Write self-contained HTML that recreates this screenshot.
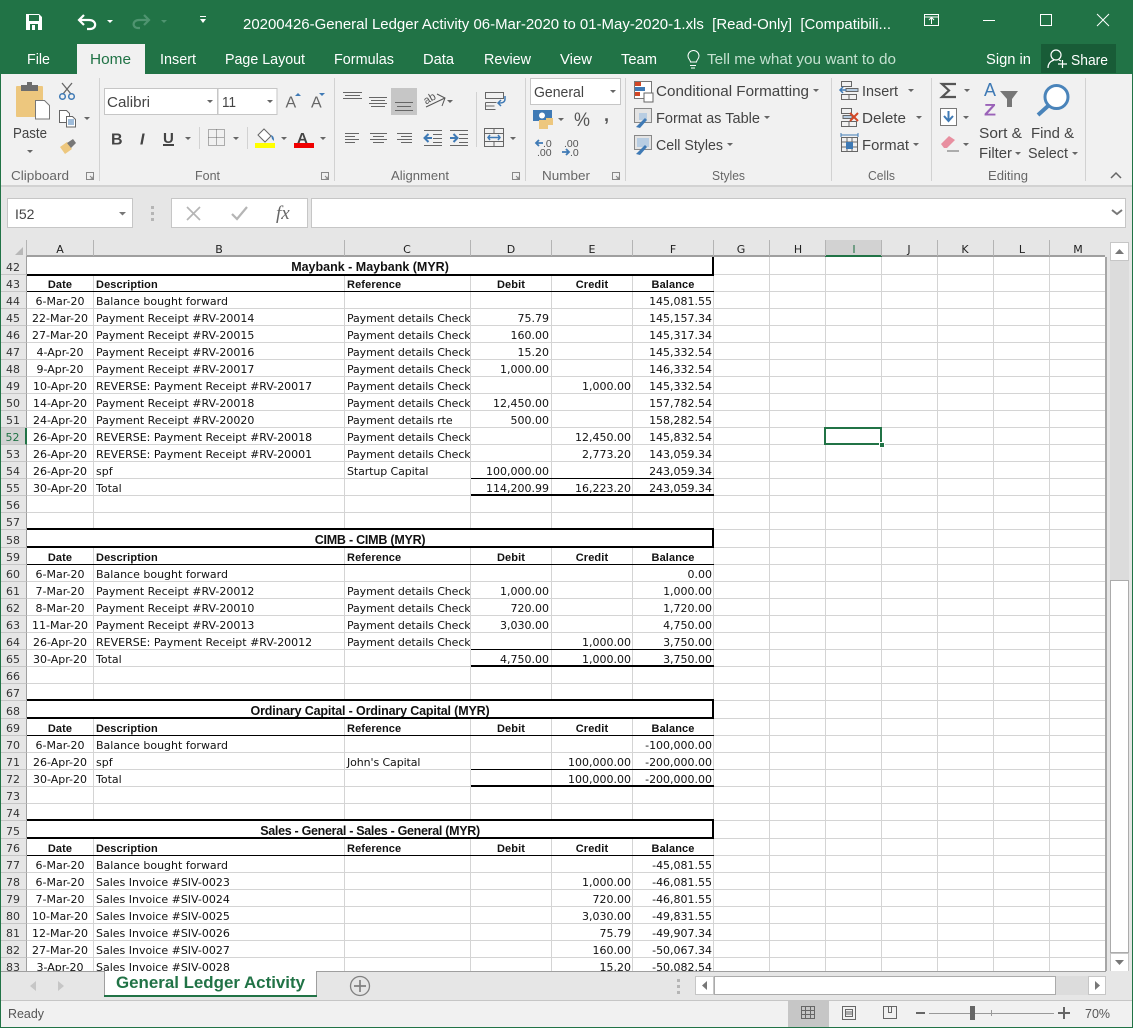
<!DOCTYPE html>
<html><head><meta charset="utf-8"><title>General Ledger Activity</title>
<style>
html,body{margin:0;padding:0;background:#fff}
#w{position:relative;width:1133px;height:1028px;overflow:hidden;background:#fff}
#w svg.c{position:absolute;left:0;top:0}
#gw{position:absolute;left:0;top:257px;width:1106px;height:714px;overflow:hidden}
table{border-collapse:separate;border-spacing:0;table-layout:fixed;width:1106px;font:11px/12px "DejaVu Sans","Liberation Sans",sans-serif;color:#111}
td,th{box-sizing:border-box;height:17px;padding:4px 0 0;border-right:1px solid #d4d4d4;border-bottom:1px solid #d4d4d4;overflow:hidden;white-space:nowrap;font-weight:normal}
th{background:#e6e6e6;color:#333;text-align:center;border-right:1px solid #9f9f9f;border-bottom:1px solid #c6c6c6}
td:nth-child(2){text-align:center}
td:nth-child(3),td:nth-child(4){padding-left:2px}
td:nth-child(4){letter-spacing:-.1px}
td:nth-child(5),td:nth-child(6),td:nth-child(7){text-align:right;padding-right:1px}
td:nth-child(5){padding-right:2px}
td.g{border-right:0;background:repeating-linear-gradient(90deg,#fff 0 55px,#d4d4d4 55px 56px)}
tr.h td{font:bold 11px/12px "Liberation Sans",sans-serif;letter-spacing:.12px}
tr.h th{font:11px/12px "DejaVu Sans",sans-serif}
tr.h td:nth-child(5),tr.h td:nth-child(6),tr.h td:nth-child(7){text-align:center;padding-right:0}
tr.t td,tr.t th{height:18px}
tr.t td:nth-child(2){font:bold 12.5px/13px "Liberation Sans",sans-serif;text-align:center;padding:4px 0 0}
tr.s th{background:#d2d2d2;color:#217346;border-right:2px solid #217346}
.b{position:absolute;background:#000}
</style></head><body><div id="w">

<div id="gw"><table>
<colgroup><col style="width:27px"><col style="width:67px"><col style="width:251px"><col style="width:126px"><col style="width:81px"><col style="width:81px"><col style="width:81px"><col style="width:392px"></colgroup>
<tr class="t"><th>42</th><td colspan="6">Maybank - Maybank (MYR)</td><td class="g"></td></tr>
<tr class="h"><th>43</th><td>Date</td><td>Description</td><td>Reference</td><td>Debit</td><td>Credit</td><td>Balance</td><td class="g"></td></tr>
<tr><th>44</th><td>6-Mar-20</td><td>Balance bought forward</td><td></td><td></td><td></td><td>145,081.55</td><td class="g"></td></tr>
<tr><th>45</th><td>22-Mar-20</td><td>Payment Receipt #RV-20014</td><td>Payment details Check</td><td>75.79</td><td></td><td>145,157.34</td><td class="g"></td></tr>
<tr><th>46</th><td>27-Mar-20</td><td>Payment Receipt #RV-20015</td><td>Payment details Check</td><td>160.00</td><td></td><td>145,317.34</td><td class="g"></td></tr>
<tr><th>47</th><td>4-Apr-20</td><td>Payment Receipt #RV-20016</td><td>Payment details Check</td><td>15.20</td><td></td><td>145,332.54</td><td class="g"></td></tr>
<tr><th>48</th><td>9-Apr-20</td><td>Payment Receipt #RV-20017</td><td>Payment details Check</td><td>1,000.00</td><td></td><td>146,332.54</td><td class="g"></td></tr>
<tr><th>49</th><td>10-Apr-20</td><td>REVERSE: Payment Receipt #RV-20017</td><td>Payment details Check</td><td></td><td>1,000.00</td><td>145,332.54</td><td class="g"></td></tr>
<tr><th>50</th><td>14-Apr-20</td><td>Payment Receipt #RV-20018</td><td>Payment details Check</td><td>12,450.00</td><td></td><td>157,782.54</td><td class="g"></td></tr>
<tr><th>51</th><td>24-Apr-20</td><td>Payment Receipt #RV-20020</td><td>Payment details rte</td><td>500.00</td><td></td><td>158,282.54</td><td class="g"></td></tr>
<tr class="s"><th>52</th><td>26-Apr-20</td><td>REVERSE: Payment Receipt #RV-20018</td><td>Payment details Check</td><td></td><td>12,450.00</td><td>145,832.54</td><td class="g"></td></tr>
<tr><th>53</th><td>26-Apr-20</td><td>REVERSE: Payment Receipt #RV-20001</td><td>Payment details Check</td><td></td><td>2,773.20</td><td>143,059.34</td><td class="g"></td></tr>
<tr><th>54</th><td>26-Apr-20</td><td>spf</td><td>Startup Capital</td><td>100,000.00</td><td></td><td>243,059.34</td><td class="g"></td></tr>
<tr><th>55</th><td>30-Apr-20</td><td>Total</td><td></td><td>114,200.99</td><td>16,223.20</td><td>243,059.34</td><td class="g"></td></tr>
<tr><th>56</th><td></td><td></td><td></td><td></td><td></td><td></td><td class="g"></td></tr>
<tr><th>57</th><td></td><td></td><td></td><td></td><td></td><td></td><td class="g"></td></tr>
<tr class="t"><th>58</th><td colspan="6" style="letter-spacing:-.23px">CIMB - CIMB (MYR)</td><td class="g"></td></tr>
<tr class="h"><th>59</th><td>Date</td><td>Description</td><td>Reference</td><td>Debit</td><td>Credit</td><td>Balance</td><td class="g"></td></tr>
<tr><th>60</th><td>6-Mar-20</td><td>Balance bought forward</td><td></td><td></td><td></td><td>0.00</td><td class="g"></td></tr>
<tr><th>61</th><td>7-Mar-20</td><td>Payment Receipt #RV-20012</td><td>Payment details Check</td><td>1,000.00</td><td></td><td>1,000.00</td><td class="g"></td></tr>
<tr><th>62</th><td>8-Mar-20</td><td>Payment Receipt #RV-20010</td><td>Payment details Check</td><td>720.00</td><td></td><td>1,720.00</td><td class="g"></td></tr>
<tr><th>63</th><td>11-Mar-20</td><td>Payment Receipt #RV-20013</td><td>Payment details Check</td><td>3,030.00</td><td></td><td>4,750.00</td><td class="g"></td></tr>
<tr><th>64</th><td>26-Apr-20</td><td>REVERSE: Payment Receipt #RV-20012</td><td>Payment details Check</td><td></td><td>1,000.00</td><td>3,750.00</td><td class="g"></td></tr>
<tr><th>65</th><td>30-Apr-20</td><td>Total</td><td></td><td>4,750.00</td><td>1,000.00</td><td>3,750.00</td><td class="g"></td></tr>
<tr><th>66</th><td></td><td></td><td></td><td></td><td></td><td></td><td class="g"></td></tr>
<tr><th>67</th><td></td><td></td><td></td><td></td><td></td><td></td><td class="g"></td></tr>
<tr class="t"><th>68</th><td colspan="6" style="letter-spacing:-.15px">Ordinary Capital - Ordinary Capital (MYR)</td><td class="g"></td></tr>
<tr class="h"><th>69</th><td>Date</td><td>Description</td><td>Reference</td><td>Debit</td><td>Credit</td><td>Balance</td><td class="g"></td></tr>
<tr><th>70</th><td>6-Mar-20</td><td>Balance bought forward</td><td></td><td></td><td></td><td>-100,000.00</td><td class="g"></td></tr>
<tr><th>71</th><td>26-Apr-20</td><td>spf</td><td>John's Capital</td><td></td><td>100,000.00</td><td>-200,000.00</td><td class="g"></td></tr>
<tr><th>72</th><td>30-Apr-20</td><td>Total</td><td></td><td></td><td>100,000.00</td><td>-200,000.00</td><td class="g"></td></tr>
<tr><th>73</th><td></td><td></td><td></td><td></td><td></td><td></td><td class="g"></td></tr>
<tr><th>74</th><td></td><td></td><td></td><td></td><td></td><td></td><td class="g"></td></tr>
<tr class="t"><th>75</th><td colspan="6" style="letter-spacing:-.3px">Sales - General - Sales - General (MYR)</td><td class="g"></td></tr>
<tr class="h"><th>76</th><td>Date</td><td>Description</td><td>Reference</td><td>Debit</td><td>Credit</td><td>Balance</td><td class="g"></td></tr>
<tr><th>77</th><td>6-Mar-20</td><td>Balance bought forward</td><td></td><td></td><td></td><td>-45,081.55</td><td class="g"></td></tr>
<tr><th>78</th><td>6-Mar-20</td><td>Sales Invoice #SIV-0023</td><td></td><td></td><td>1,000.00</td><td>-46,081.55</td><td class="g"></td></tr>
<tr><th>79</th><td>7-Mar-20</td><td>Sales Invoice #SIV-0024</td><td></td><td></td><td>720.00</td><td>-46,801.55</td><td class="g"></td></tr>
<tr><th>80</th><td>10-Mar-20</td><td>Sales Invoice #SIV-0025</td><td></td><td></td><td>3,030.00</td><td>-49,831.55</td><td class="g"></td></tr>
<tr><th>81</th><td>12-Mar-20</td><td>Sales Invoice #SIV-0026</td><td></td><td></td><td>75.79</td><td>-49,907.34</td><td class="g"></td></tr>
<tr><th>82</th><td>27-Mar-20</td><td>Sales Invoice #SIV-0027</td><td></td><td></td><td>160.00</td><td>-50,067.34</td><td class="g"></td></tr>
<tr><th>83</th><td>3-Apr-20</td><td>Sales Invoice #SIV-0028</td><td></td><td></td><td>15.20</td><td>-50,082.54</td><td class="g"></td></tr>
</table></div>

<!-- black borders -->
<div class="b" style="left:27px;top:274px;width:687px;height:2px"></div>
<div class="b" style="left:712px;top:257px;width:2px;height:18px"></div>
<div class="b" style="left:27px;top:291px;width:687px;height:1px"></div>
<div class="b" style="left:471px;top:478px;width:243px;height:1px"></div>
<div class="b" style="left:471px;top:494px;width:243px;height:2px"></div>
<div class="b" style="left:27px;top:528px;width:687px;height:2px"></div>
<div class="b" style="left:27px;top:546px;width:687px;height:2px"></div>
<div class="b" style="left:712px;top:528px;width:2px;height:20px"></div>
<div class="b" style="left:27px;top:564px;width:687px;height:1px"></div>
<div class="b" style="left:471px;top:649px;width:243px;height:1px"></div>
<div class="b" style="left:471px;top:665px;width:243px;height:2px"></div>
<div class="b" style="left:27px;top:699px;width:687px;height:2px"></div>
<div class="b" style="left:27px;top:717px;width:687px;height:2px"></div>
<div class="b" style="left:712px;top:699px;width:2px;height:20px"></div>
<div class="b" style="left:27px;top:735px;width:687px;height:1px"></div>
<div class="b" style="left:471px;top:769px;width:243px;height:1px"></div>
<div class="b" style="left:471px;top:785px;width:243px;height:2px"></div>
<div class="b" style="left:27px;top:819px;width:687px;height:2px"></div>
<div class="b" style="left:27px;top:837px;width:687px;height:2px"></div>
<div class="b" style="left:712px;top:819px;width:2px;height:20px"></div>
<div class="b" style="left:27px;top:855px;width:687px;height:1px"></div>
<!-- selection -->
<div style="position:absolute;left:824px;top:427px;width:54px;height:14px;border:2px solid #217346"></div>
<div style="position:absolute;left:879px;top:442px;width:4px;height:4px;background:#217346;border:1px solid #fff"></div>

<svg class="c" width="1133" height="1028" viewBox="0 0 1133 1028" style="pointer-events:none" font-family="Liberation Sans, sans-serif">
<!-- title bar -->
<rect x="0" y="0" width="1133" height="74" fill="#217346"/>
<rect x="77" y="44" width="68" height="31" fill="#f1f1f1"/>
<!-- ribbon -->
<rect x="1" y="74" width="1131" height="111" fill="#f1f1f1"/>
<rect x="1" y="185" width="1131" height="2" fill="#d2d2d2"/>
<rect x="1" y="187" width="1131" height="53" fill="#e6e6e6"/>
<!-- frame -->
<rect x="0" y="74" width="1" height="954" fill="#217346"/>
<rect x="1132" y="74" width="1" height="954" fill="#217346"/>
<rect x="0" y="1027" width="1133" height="1" fill="#217346"/>

<!-- QAT -->
<g fill="none">
<path d="M26 14h13l3 3v13H26z" fill="#fff"/>
<rect x="29" y="15" width="10" height="6" fill="#217346"/>
<rect x="30" y="24" width="8" height="6" fill="#217346"/>
<rect x="32" y="25" width="3" height="5" fill="#fff"/>
<path d="M80 20h9c8 0 8 9 1 9h-3M84 15l-5 5 5 5" stroke="#fff" stroke-width="2.2"/>
<path d="M148 20h-9c-7 0-7 8-1 8h2M144 15l5 5-5 5" stroke="#4f9470" stroke-width="2.2"/>
</g>
<path d="M107 20h6l-3 3z" fill="#fff"/><path d="M161 20h6l-3 3z" fill="#4f9470"/>
<path d="M200 16h6v1h-6zM200 19h6l-3 4z" fill="#fff"/>
<text x="243" y="29" font-size="15" fill="#fff" textLength="648" lengthAdjust="spacingAndGlyphs" xml:space="preserve">20200426-General Ledger Activity 06-Mar-2020 to 01-May-2020-1.xls  [Read-Only]  [Compatibili...</text>
<g fill="none" stroke="#fff">
<rect x="924.500" y="14.500" width="14" height="11"/>
<path d="M924 17h15M931.500 24v-6M929 20l2.500-2.500L934 20"/>
<path d="M983 20.500h12"/>
<rect x="1040.500" y="14.500" width="11" height="11"/>
<path d="M1097 14l12 12M1109 14l-12 12"/>
</g>

<!-- tabs -->
<g font-size="14.500" fill="#fff">
<text x="27" y="64" textLength="23" lengthAdjust="spacingAndGlyphs">File</text>
<text x="90" y="64" textLength="41" lengthAdjust="spacingAndGlyphs" fill="#217346">Home</text>
<text x="160" y="64" textLength="36" lengthAdjust="spacingAndGlyphs">Insert</text>
<text x="225" y="64" textLength="80" lengthAdjust="spacingAndGlyphs">Page Layout</text>
<text x="334" y="64" textLength="60" lengthAdjust="spacingAndGlyphs">Formulas</text>
<text x="423" y="64" textLength="31" lengthAdjust="spacingAndGlyphs">Data</text>
<text x="484" y="64" textLength="47" lengthAdjust="spacingAndGlyphs">Review</text>
<text x="560" y="64" textLength="32" lengthAdjust="spacingAndGlyphs">View</text>
<text x="621" y="64" textLength="36" lengthAdjust="spacingAndGlyphs">Team</text>
<text x="707" y="64" textLength="189" lengthAdjust="spacingAndGlyphs" fill="#c3e0cf">Tell me what you want to do</text>
<text x="986" y="64" textLength="45" lengthAdjust="spacingAndGlyphs">Sign in</text>
</g>
<path d="M690 65.500h6M691 68h4M690.500 62c0-2-2.500-3-2.500-6a5.500 5.500 0 0 1 11 0c0 3-2.500 4-2.500 6z" fill="none" stroke="#fff"/>
<rect x="1041" y="44" width="75" height="29" fill="#185c37"/>
<g fill="none" stroke="#fff" stroke-width="1.200"><circle cx="1056" cy="55" r="5"/><path d="M1048 68c0-5 3-7 6-8M1059 60l2 1M1058 64h9M1062.500 60v8"/></g>
<text x="1071" y="65" font-size="14.500" fill="#fff" textLength="37" lengthAdjust="spacingAndGlyphs">Share</text>

<!-- separators -->
<g fill="#d2d2d2"><rect x="99" y="78" width="1" height="103"/><rect x="334" y="78" width="1" height="103"/><rect x="525" y="78" width="1" height="103"/><rect x="625" y="78" width="1" height="103"/><rect x="831" y="78" width="1" height="103"/><rect x="931" y="78" width="1" height="103"/><rect x="1085" y="78" width="1" height="103"/><rect x="199" y="127" width="1" height="22"/><rect x="247" y="127" width="1" height="22"/><rect x="476" y="92" width="1" height="55"/></g>

<!-- group labels -->
<g font-size="13" fill="#666">
<text x="11" y="180" textLength="58" lengthAdjust="spacingAndGlyphs">Clipboard</text>
<text x="195" y="180" textLength="25" lengthAdjust="spacingAndGlyphs">Font</text>
<text x="391" y="180" textLength="58" lengthAdjust="spacingAndGlyphs">Alignment</text>
<text x="542" y="180" textLength="48" lengthAdjust="spacingAndGlyphs">Number</text>
<text x="712" y="180" textLength="33" lengthAdjust="spacingAndGlyphs">Styles</text>
<text x="868" y="180" textLength="27" lengthAdjust="spacingAndGlyphs">Cells</text>
<text x="988" y="180" textLength="40" lengthAdjust="spacingAndGlyphs">Editing</text>
</g>
<g fill="none" stroke="#888"><path d="M86.500 172.500h7v7h-7zM90 176l3 3M93 176.500v2.500h-2.500"/><path d="M321.500 172.500h7v7h-7zM325 176l3 3M328 176.500v2.500h-2.500"/><path d="M512.500 172.500h7v7h-7zM516 176l3 3M519 176.500v2.500h-2.500"/><path d="M612.500 172.500h7v7h-7zM616 176l3 3M619 176.500v2.500h-2.500"/></g>

<!-- Clipboard -->
<rect x="16" y="86" width="27" height="31" rx="1" fill="#edc77e"/>
<rect x="21" y="85" width="17" height="6" fill="#6d6d6d"/><rect x="27" y="82" width="5" height="4" fill="#6d6d6d"/>
<path d="M35.500 100.500h9l5 5v13.500h-14z" fill="#fff" stroke="#777"/>
<text x="13" y="138" font-size="14.500" fill="#444" textLength="34" lengthAdjust="spacingAndGlyphs">Paste</text>
<path d="M27 150h6l-3 3z" fill="#666"/>
<g fill="none" stroke="#666" stroke-width="1.300"><path d="M62 83l9 11M72 83l-9 11"/></g>
<g fill="none" stroke="#3f7ab5" stroke-width="1.500"><circle cx="62.500" cy="96.500" r="2.800"/><circle cx="71.500" cy="96.500" r="2.800"/></g>
<g fill="#fff" stroke="#666"><path d="M59.500 110.500h7l3 3v9h-10z"/><path d="M66.500 116.500h6l3 3v7.500h-9z"/></g>
<path d="M68 120h6M68 122h6M68 124h6" stroke="#3f7ab5"/>
<path d="M84 117h6l-3 3z" fill="#666"/>
<path d="M60 147l7-5 5 7-7 5z" fill="#edc77e"/><path d="M67 143l6-4 3 4-5 5z" fill="#777"/>

<!-- Font -->
<rect x="104.500" y="88.500" width="113" height="26" fill="#fff" stroke="#c6c6c6"/>
<rect x="218" y="88.500" width="59" height="26" fill="#fff" stroke="#c6c6c6"/>
<text x="107" y="107" font-size="14.500" fill="#444" textLength="43" lengthAdjust="spacingAndGlyphs">Calibri</text>
<text x="222" y="107" font-size="14.500" fill="#444" textLength="14" lengthAdjust="spacingAndGlyphs">11</text>
<path d="M207 100h6l-3 3zM267 100h6l-3 3z" fill="#666"/>
<text x="285.500" y="107.500" font-size="16" fill="#666">A</text><path d="M295 96h6l-3-3z" fill="#3f7ab5"/>
<text x="311" y="107.500" font-size="16" fill="#666">A</text><path d="M319 93h6l-3 3z" fill="#3f7ab5"/>
<text x="111" y="144.500" font-size="16" fill="#444" font-weight="bold">B</text>
<text x="140" y="144.500" font-size="16" fill="#444" font-weight="bold" font-style="italic">I</text>
<text x="163" y="143" font-size="15" fill="#444" font-weight="bold">U</text><rect x="163" y="144" width="11" height="2" fill="#444"/>
<path d="M185 137h6l-3 3zM233 137h6l-3 3zM281 137h6l-3 3zM320 137h6l-3 3z" fill="#666"/>
<path d="M208.500 129.500h16v16h-16zM216.500 129.500v16M208.500 137.500h16" fill="none" stroke="#666" stroke-dasharray="1 1"/>
<path d="M258 135l6-6 7 7-6 6z" fill="#fff" stroke="#666"/><path d="M271 135c3 1 3 4 3 6l-2-2z" fill="#3f7ab5"/>
<rect x="255" y="143" width="20" height="5" fill="#ffff00"/>
<text x="297" y="143" font-size="15" fill="#444" font-weight="bold">A</text>
<rect x="294" y="143" width="20" height="5" fill="#f00000"/>

<!-- Alignment -->
<rect x="391" y="88" width="26" height="27" fill="#c6c6c6"/>
<g fill="none" stroke="#666">
<path d="M343 92.500h19M345 95.500h15M343 98.500h19"/>
<path d="M369 97.500h18M371 100.500h14M369 103.500h18M371 106.500h14"/>
<path d="M395 102.500h18M397 106.500h14M395 110.500h18"/>
<path d="M345 133.500h14M345 136.500h10M345 139.500h14M345 142.500h10"/>
<path d="M370 133.500h17M373 136.500h11M370 139.500h17M373 142.500h11"/>
<path d="M397 133.500h15M401 136.500h11M397 139.500h15M401 142.500h11"/>
<path d="M424 130.500h18M433 134.500h9M433 138.500h9M433 142.500h9M424 145.500h18"/>
<path d="M450 130.500h18M459 134.500h9M459 138.500h9M459 142.500h9M450 145.500h18"/>
<path d="M485.500 92.500h18v6h-18zM485.500 102.500h11M485.500 102.500v7h10M485.500 106h9"/>
<rect x="484.500" y="128.500" width="19" height="18"/>
<path d="M484 133.500h20M484 141.500h20M494 128v5M494 142v5"/>
<path d="M426 107l19-9M437 94l8 4-3 8" stroke="#555"/>
</g>
<text x="424" y="103" font-size="11" fill="#555" transform="rotate(-30 428 100)">ab</text>
<path d="M447 100h6l-3 3zM510 137h6l-3 3z" fill="#666"/>
<path d="M424 138h8M428.500 134l-4 4 4 4" fill="none" stroke="#3f7ab5" stroke-width="2"/>
<path d="M458 138h-8M453.500 134l4 4-4 4" fill="none" stroke="#3f7ab5" stroke-width="2"/>
<path d="M488 137.500h12M490 135l-2 2.500 2 2.500M498 135l2 2.500-2 2.500" fill="none" stroke="#3f7ab5" stroke-width="1.500"/>
<path d="M505 96v3c0 3-2 4-6 4M501 100l-3 3 3 3" fill="none" stroke="#3f7ab5" stroke-width="1.500"/>

<!-- Number -->
<rect x="530.500" y="78.500" width="90" height="26" fill="#fff" stroke="#c6c6c6"/>
<text x="534" y="97" font-size="14.500" fill="#444" textLength="50" lengthAdjust="spacingAndGlyphs">General</text>
<path d="M610 90h6l-3 3zM558 118h6l-3 3z" fill="#666"/>
<rect x="533" y="110" width="19" height="11" fill="#3f7ab5"/><circle cx="542" cy="115.500" r="3" fill="#fff"/>
<rect x="539" y="120" width="9" height="9" fill="#edc77e"/><rect x="546" y="118" width="7" height="7" fill="#edc77e"/>
<text x="574" y="126" font-size="19" fill="#555" textLength="16" lengthAdjust="spacingAndGlyphs">%</text>
<text x="604" y="121" font-size="18" font-weight="bold" fill="#555">,</text>
<g font-size="10.500" fill="#555">
<text x="543" y="147">.0</text><text x="537" y="156">.00</text>
<text x="564" y="147">.00</text><text x="570" y="156">.0</text>
</g>
<path d="M536 143h7M539 140l-3 3 3 3M562 152h7M566 149l3 3-3 3" fill="none" stroke="#3f7ab5" stroke-width="1.800"/>

<!-- Styles -->
<rect x="634.500" y="81.500" width="17" height="17" fill="#fff" stroke="#777"/>
<rect x="635" y="82" width="6" height="4" fill="#d24726"/><rect x="635" y="87" width="10" height="4" fill="#3f7ab5"/><rect x="635" y="92" width="5" height="4" fill="#d24726"/>
<rect x="644" y="93" width="9" height="9" fill="#fff" stroke="#666"/>
<rect x="634.500" y="108.500" width="17" height="14" fill="#e4e4e4" stroke="#888"/><rect x="639" y="113" width="8" height="7" fill="#b8cde2"/>
<path d="M636 127l9-9 2 2-7 8z" fill="#3f7ab5"/>
<rect x="634.500" y="135.500" width="17" height="14" fill="#e4e4e4" stroke="#888"/><rect x="637" y="138" width="12" height="9" fill="#b8cde2"/>
<path d="M636 154l9-9 2 2-7 8z" fill="#3f7ab5"/>
<g font-size="14.500" fill="#444">
<text x="656" y="96" textLength="153" lengthAdjust="spacingAndGlyphs">Conditional Formatting</text>
<text x="656" y="123" textLength="104" lengthAdjust="spacingAndGlyphs">Format as Table</text>
<text x="656" y="150" textLength="67" lengthAdjust="spacingAndGlyphs">Cell Styles</text>
<text x="862" y="96" textLength="36" lengthAdjust="spacingAndGlyphs">Insert</text>
<text x="862" y="123" textLength="44" lengthAdjust="spacingAndGlyphs">Delete</text>
<text x="862" y="150" textLength="47" lengthAdjust="spacingAndGlyphs">Format</text>
<text x="979" y="138" textLength="43" lengthAdjust="spacingAndGlyphs">Sort &amp;</text>
<text x="979" y="158" textLength="33" lengthAdjust="spacingAndGlyphs">Filter</text>
<text x="1031" y="138" textLength="43" lengthAdjust="spacingAndGlyphs">Find &amp;</text>
<text x="1028" y="158" textLength="40" lengthAdjust="spacingAndGlyphs">Select</text>
</g>
<path d="M813 89h6l-3 3zM764 116h6l-3 3zM727 143h6l-3 3zM908 89h6l-3 3zM916 116h6l-3 3zM913 143h6l-3 3zM964 89h6l-3 3zM963 116h6l-3 3zM963 143h6l-3 3zM1015 152h6l-3 3zM1072 152h6l-3 3z" fill="#666"/>

<!-- Cells icons -->
<g fill="none" stroke="#666">
<path d="M841.500 81.500h10v5h-10zM841.500 94.500h15v5h-15zM849 94v5M841.500 94v5"/>
<path d="M846 88.500h12v3h-12z" fill="#b8cde2"/>
<path d="M841.500 108.500h10v5h-10zM841.500 121.500h15v5h-15zM849 121v5"/>
<path d="M843 115.500h9v3h-9z" fill="#b8cde2"/>
<rect x="841.500" y="137.500" width="16" height="14"/><path d="M841 142h17M841 147h17M847 137v15M852 137v15"/>
</g>
<path d="M840 90h6M843 87l-3 3 3 3" fill="none" stroke="#3f7ab5" stroke-width="1.500"/>
<path d="M850 113l8 8M858 113l-8 8" stroke="#d24726" stroke-width="2"/>
<rect x="846" y="142" width="7" height="7" fill="#3f7ab5"/>
<path d="M841 135h17M841 133v4M858 133v4" stroke="#3f7ab5" fill="none"/>

<!-- Editing -->
<path d="M956 84h-14l7 6.500-7 6.500h14" fill="none" stroke="#555" stroke-width="2.200"/>
<rect x="940.500" y="108.500" width="16" height="17" fill="#fff" stroke="#777"/>
<path d="M948.500 111v9M944 116l4.500 5 4.500-5" fill="none" stroke="#3f7ab5" stroke-width="2"/>
<path d="M941 144l8-8 6 4-8 8h-3z" fill="#e88fa0"/><path d="M947 151h12" stroke="#666"/>
<text x="984" y="96" font-size="18" fill="#3f7ab5" textLength="12" lengthAdjust="spacingAndGlyphs">A</text>
<text x="984" y="115.500" font-size="17" font-weight="bold" fill="#9a62b8" textLength="12" lengthAdjust="spacingAndGlyphs">Z</text>
<path d="M1000 91h18l-6 8v8h-5v-8z" fill="#777"/>
<circle cx="1056.500" cy="97" r="11.500" fill="#fff" stroke="#4a84ba" stroke-width="3"/>
<path d="M1048 106l-10 9" stroke="#4a84ba" stroke-width="4"/>
<path d="M1111 178l5-5 5 5" fill="none" stroke="#666" stroke-width="1.500"/>

<!-- Formula bar -->
<rect x="7.500" y="198.500" width="125" height="29" fill="#fff" stroke="#c6c6c6"/>
<text x="15" y="219" font-size="14" fill="#444">I52</text>
<path d="M119 212h7l-3.500 3.500z" fill="#777"/>
<rect x="171.500" y="198.500" width="136" height="29" fill="#fff" stroke="#c6c6c6"/>
<rect x="311.500" y="198.500" width="814" height="29" fill="#fff" stroke="#c6c6c6"/>
<g fill="#b5b5b5"><rect x="151" y="206" width="3" height="3"/><rect x="151" y="212" width="3" height="3"/><rect x="151" y="218" width="3" height="3"/></g>
<path d="M187 207l13 13M200 207l-13 13" stroke="#b5b5b5" stroke-width="1.700"/>
<path d="M232 214l5 5 10-12" fill="none" stroke="#b5b5b5" stroke-width="2.200"/>
<text x="276" y="219" font-family="Liberation Serif, serif" font-style="italic" font-size="19" fill="#666">fx</text>
<path d="M1112 210l5 4 5-4" fill="none" stroke="#777" stroke-width="2"/>

<!-- column header -->
<rect x="1" y="240" width="1105" height="17" fill="#e6e6e6"/>
<rect x="825" y="240" width="57" height="15" fill="#d2d2d2"/>
<rect x="26" y="255" width="1080" height="2" fill="#9f9f9f"/>
<rect x="825" y="255" width="57" height="2" fill="#217346"/>
<path d="M15 255l8-8v8z" fill="#b8b8b8"/>
<g fill="#b4b4b4">
<rect x="26" y="240" width="1" height="16"/><rect x="93" y="240" width="1" height="16"/><rect x="344" y="240" width="1" height="16"/><rect x="470" y="240" width="1" height="16"/><rect x="551" y="240" width="1" height="16"/><rect x="632" y="240" width="1" height="16"/><rect x="713" y="240" width="1" height="16"/><rect x="769" y="240" width="1" height="16"/><rect x="825" y="240" width="1" height="16"/><rect x="881" y="240" width="1" height="16"/><rect x="937" y="240" width="1" height="16"/><rect x="993" y="240" width="1" height="16"/><rect x="1049" y="240" width="1" height="16"/><rect x="1105" y="240" width="1" height="16"/>
</g>
<g font-family="DejaVu Sans, sans-serif" font-size="11" fill="#222" text-anchor="middle">
<text x="60" y="253">A</text><text x="219" y="253">B</text><text x="407" y="253">C</text><text x="511" y="253">D</text><text x="592" y="253">E</text><text x="673" y="253">F</text><text x="741" y="253">G</text><text x="798" y="253">H</text><text x="854" y="253" fill="#217346">I</text><text x="909" y="253">J</text><text x="965" y="253">K</text><text x="1022" y="253">L</text><text x="1078" y="253">M</text>
</g>

<!-- vertical scrollbar -->
<rect x="1105" y="240" width="27" height="731" fill="#e6e6e6"/>
<rect x="1105" y="257" width="2" height="714" fill="#a6a6a6"/>
<rect x="1110" y="261" width="19" height="692" fill="#dcdcdc"/>
<rect x="1110.500" y="242.500" width="18" height="18" fill="#fff" stroke="#c6c6c6"/>
<path d="M1115 254l4.500-5 4.500 5z" fill="#777"/>
<rect x="1110.500" y="580.500" width="18" height="372" fill="#fff" stroke="#ababab"/>
<rect x="1110.500" y="953.500" width="18" height="18" fill="#fff" stroke="#c6c6c6"/>
<path d="M1115 960l4.500 5 4.500-5z" fill="#777"/>

<!-- tab bar -->
<rect x="1" y="971" width="1131" height="29" fill="#e6e6e6"/>
<rect x="1" y="971" width="1105" height="1" fill="#9f9f9f"/>
<rect x="104" y="971" width="213" height="26" fill="#fff"/>
<rect x="104" y="971" width="1" height="26" fill="#9f9f9f"/><rect x="316" y="971" width="1" height="26" fill="#9f9f9f"/>
<rect x="104" y="995" width="213" height="2" fill="#217346"/>
<text x="116" y="988" font-size="17" font-weight="bold" fill="#217346" textLength="189" lengthAdjust="spacingAndGlyphs">General Ledger Activity</text>
<path d="M36 981l-6 5 6 5zM58 981l6 5-6 5z" fill="#c6c6c6"/>
<circle cx="360" cy="986" r="9.500" fill="none" stroke="#808080" stroke-width="1.300"/>
<path d="M354 986h12M360 980v12" stroke="#808080" stroke-width="1.700"/>
<g fill="#b5b5b5"><rect x="677" y="979" width="3" height="3"/><rect x="677" y="985" width="3" height="3"/><rect x="677" y="991" width="3" height="3"/></g>
<rect x="695.500" y="976.500" width="18" height="18" fill="#fff" stroke="#c6c6c6"/>
<path d="M707 981l-5 4.500 5 4.500z" fill="#777"/>
<rect x="714.500" y="976.500" width="341" height="18" fill="#fff" stroke="#ababab"/>
<rect x="1056" y="976" width="32" height="19" fill="#dcdcdc"/>
<rect x="1088.500" y="976.500" width="17" height="18" fill="#fff" stroke="#c6c6c6"/>
<path d="M1095 981l5 4.500-5 4.500z" fill="#777"/>

<!-- status bar -->
<rect x="1" y="1000" width="1131" height="1" fill="#c6c6c6"/>
<rect x="1" y="1001" width="1131" height="26" fill="#f1f1f1"/>
<text x="8" y="1018" font-size="13" fill="#555" textLength="36" lengthAdjust="spacingAndGlyphs">Ready</text>
<rect x="788" y="1001" width="41" height="26" fill="#c6c6c6"/>
<g fill="none" stroke="#666">
<path d="M801.500 1006.500h13v12h-13zM801.500 1010.500h13M801.500 1014.500h13M805.500 1006v13M810.500 1006v13"/>
<path d="M842.500 1006.500h13v13h-13zM845.500 1009.500h7v7h-7zM846 1012h6M846 1014h6"/>
<path d="M883.500 1006.500h13v12h-13zM888.500 1006.500v6h3v-6"/>
</g>
<rect x="916" y="1012" width="9" height="2" fill="#666"/>
<rect x="929" y="1013" width="125" height="1" fill="#999"/>
<rect x="991" y="1010" width="1" height="6" fill="#999"/>
<rect x="970" y="1006" width="5" height="14" fill="#666"/>
<path d="M1058 1013h12M1064 1007v12" stroke="#666" stroke-width="2"/>
<text x="1085" y="1018" font-size="13" fill="#555" textLength="25" lengthAdjust="spacingAndGlyphs">70%</text>
</svg>
</div></body></html>
